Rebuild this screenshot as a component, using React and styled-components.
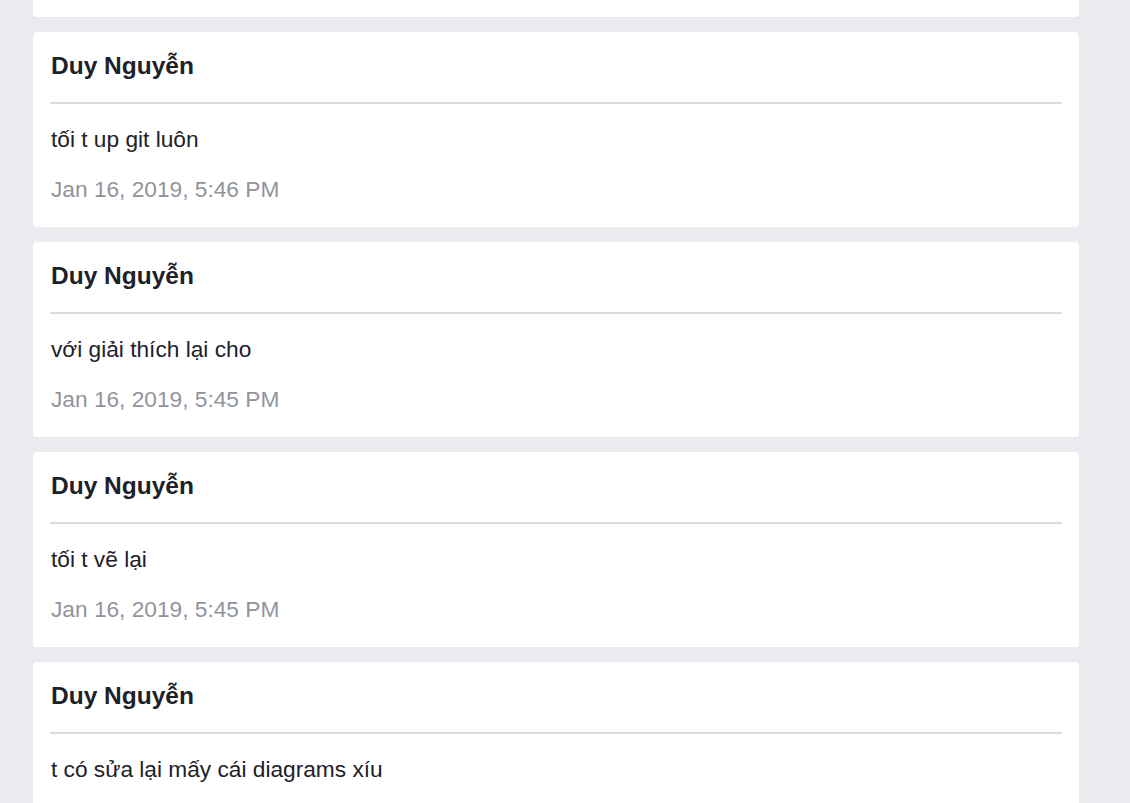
import React from 'react'
import styled, {createGlobalStyle} from 'styled-components'

const GlobalStyle = createGlobalStyle`
    html, body {
        margin:0;
        padding:0;
        background:#e9ebee;
        overflow:hidden;
        font-family:"Liberation Sans", Arial, sans-serif;
    }
`

const Feed = styled.div`
    display:flex;
    flex-direction:column;
    gap:15px;
    width:1046px;
    margin-left:33px;
`

// bottom of the previous card, scrolled mostly out of view
const CardTail = styled.div`
    height:17px;
    background:#fff;
    border-radius:0 0 4px 4px;
`

const Card = styled.div`
    background:#fff;
    border-radius:4px;
    padding:20px 18px 25px;
    box-sizing:border-box;
    display:flex;
    flex-direction:column;
`

const Author = styled.h3`
    margin:0;
    font-size:24.5px;
    line-height:28px;
    font-weight:700;
    color:#1d2129;
`

const Divider = styled.hr`
    border:none;
    height:2px;
    background:#dadde1;
    margin:22px -1px 22px;
`

const Message = styled.p`
    margin:0;
    font-size:22.7px;
    line-height:26px;
    color:#1d2129;
`

const Time = styled.p`
    margin:24px 0 0;
    font-size:22.7px;
    line-height:26px;
    color:#90949c;
`

const comments = [
    {author:'Duy Nguyễn', text:'tối t up git luôn', time:'Jan 16, 2019, 5:46 PM'},
    {author:'Duy Nguyễn', text:'với giải thích lại cho', time:'Jan 16, 2019, 5:45 PM'},
    {author:'Duy Nguyễn', text:'tối t vẽ lại', time:'Jan 16, 2019, 5:45 PM'},
    {author:'Duy Nguyễn', text:'t có sửa lại mấy cái diagrams xíu', time:'Jan 16, 2019, 5:44 PM'},
]

const Comment = props => (
    <Card>
        <Author>{props.author}</Author>
        <Divider />
        <Message>{props.text}</Message>
        <Time>{props.time}</Time>
    </Card>
)

export default function App() {
    return (
        <>
            <GlobalStyle />
            <Feed>
                <CardTail />
                {comments.map((c, i) => <Comment key={i} {...c} />)}
            </Feed>
        </>
    )
}
